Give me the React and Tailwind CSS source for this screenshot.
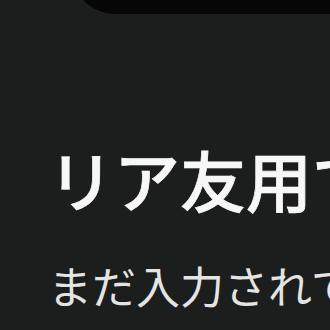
import React from 'react';

export default function App() {
  return (
    <div
      className="w-[330px] h-[330px] overflow-hidden bg-[#1c1d1d]"
      style={{ fontFamily: '"Noto Sans CJK JP", "Noto Sans", sans-serif' }}
    >
      {/* media card peeking in from the top */}
      <div className="ml-[70px] -mt-[46px] h-[60px] w-[320px] rounded-bl-[46px] bg-[#060606]" />

      <div className="pl-[48px] pt-[131px] whitespace-nowrap">
        <h1 className="text-[66px] leading-none font-medium text-[#f7f7f7] [-webkit-text-stroke:0.7px_#f7f7f7]">
          リア友用です
        </h1>
        <p className="mt-[52px] text-[44px] leading-none font-normal text-[#e4e4e4]">まだ入力されていません</p>
      </div>
    </div>
  );
}
